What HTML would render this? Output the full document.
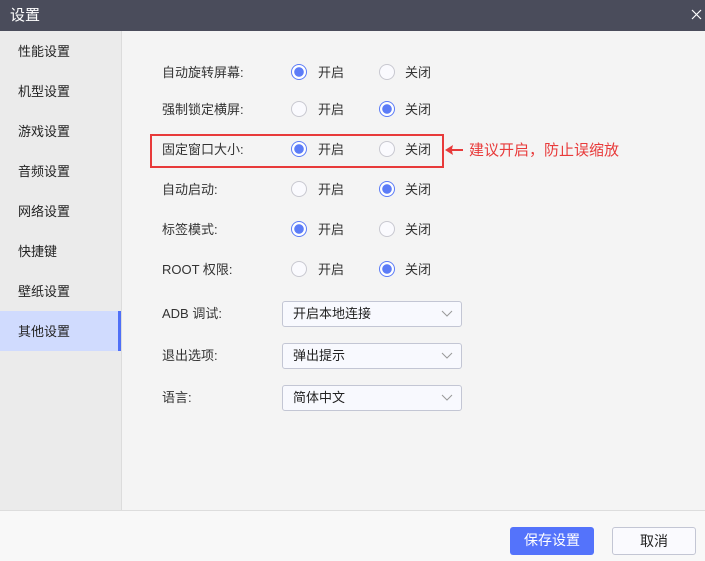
<!DOCTYPE html><html><head><meta charset="utf-8"><style>
*{margin:0;padding:0;box-sizing:border-box}
body{width:705px;height:561px;position:relative;background:#f4f4f4;font-family:"Liberation Sans","Noto Sans CJK SC",sans-serif;font-size:13px;color:#333;overflow:hidden}
.a{position:absolute}
.title{left:0;top:0;width:705px;height:31px;background:#4a4c5b;color:#fff;font-size:15px;line-height:31px;padding-left:10px}
.side{left:0;top:31px;width:122px;height:479px;background:#ebebeb;border-right:1px solid #dcdcdc}
.si{position:absolute;left:18px;font-size:13px;color:#222;line-height:20px}
.act{left:0;top:311px;width:121px;height:40px;background:#d0dbfe;border-right:3px solid #4f6ff7}
.lbl{left:162px;line-height:20px;color:#333}
.r{width:16px;height:16px;border-radius:50%;border:1px solid #c8c8d0;background:#fafafe}
.r.on{border:1px solid #5c7cf7;background:radial-gradient(circle,#5c7cf7 0 4.5px,#fff 5px)}
.t{line-height:20px}
.dd{left:282px;width:180px;height:26px;border:1px solid #c3c6d4;border-radius:3px;background:#f8f9fe;padding-left:10px;line-height:24px;color:#222}
.dd svg{position:absolute;right:8px;top:8px}
.foot{left:0;top:510px;width:705px;height:51px;background:#f8f8f8;border-top:1px solid #ddd}
.btn{top:527px;height:28px;border-radius:3px;text-align:center;line-height:27px;font-size:14px}
</style></head><body>
<div class="a title">设置</div>
<svg class="a" style="left:691px;top:9px" width="11" height="11"><path d="M1 1L10 10M10 1L1 10" stroke="#fff" stroke-width="1.2"/></svg>
<div class="a side"></div>
<div class="a act"></div>
<div class="si" style="top:42px">性能设置</div>
<div class="si" style="top:82px">机型设置</div>
<div class="si" style="top:122px">游戏设置</div>
<div class="si" style="top:162px">音频设置</div>
<div class="si" style="top:202px">网络设置</div>
<div class="si" style="top:242px">快捷键</div>
<div class="si" style="top:282px">壁纸设置</div>
<div class="si" style="top:322px">其他设置</div>

<div class="a lbl" style="top:63px">自动旋转屏幕:</div>
<div class="a r on" style="left:291px;top:64px"></div><div class="a t" style="left:318px;top:63px">开启</div>
<div class="a r" style="left:379px;top:64px"></div><div class="a t" style="left:405px;top:63px">关闭</div>

<div class="a lbl" style="top:100px">强制锁定横屏:</div>
<div class="a r" style="left:291px;top:101px"></div><div class="a t" style="left:318px;top:100px">开启</div>
<div class="a r on" style="left:379px;top:101px"></div><div class="a t" style="left:405px;top:100px">关闭</div>

<div class="a" style="left:150px;top:134px;width:294px;height:34px;border:2px solid #e83a3a"></div>
<div class="a lbl" style="top:140px">固定窗口大小:</div>
<div class="a r on" style="left:291px;top:141px"></div><div class="a t" style="left:318px;top:140px">开启</div>
<div class="a r" style="left:379px;top:141px"></div><div class="a t" style="left:405px;top:140px">关闭</div>
<svg class="a" style="left:444px;top:144px" width="20" height="12"><path d="M1 6L9 1L8 5H19V7H8L9 11Z" fill="#e83a3a"/></svg>
<div class="a" style="left:469px;top:141px;color:#e83a3a;font-size:15px;line-height:20px">建议开启，防止误缩放</div>

<div class="a lbl" style="top:180px">自动启动:</div>
<div class="a r" style="left:291px;top:181px"></div><div class="a t" style="left:318px;top:180px">开启</div>
<div class="a r on" style="left:379px;top:181px"></div><div class="a t" style="left:405px;top:180px">关闭</div>

<div class="a lbl" style="top:220px">标签模式:</div>
<div class="a r on" style="left:291px;top:221px"></div><div class="a t" style="left:318px;top:220px">开启</div>
<div class="a r" style="left:379px;top:221px"></div><div class="a t" style="left:405px;top:220px">关闭</div>

<div class="a lbl" style="top:260px">ROOT 权限:</div>
<div class="a r" style="left:291px;top:261px"></div><div class="a t" style="left:318px;top:260px">开启</div>
<div class="a r on" style="left:379px;top:261px"></div><div class="a t" style="left:405px;top:260px">关闭</div>

<div class="a lbl" style="top:304px">ADB 调试:</div>
<div class="a dd" style="top:301px">开启本地连接<svg width="12" height="8"><path d="M1 1L6 6L11 1" stroke="#999" fill="none"/></svg></div>
<div class="a lbl" style="top:346px">退出选项:</div>
<div class="a dd" style="top:343px">弹出提示<svg width="12" height="8"><path d="M1 1L6 6L11 1" stroke="#999" fill="none"/></svg></div>
<div class="a lbl" style="top:388px">语言:</div>
<div class="a dd" style="top:385px">简体中文<svg width="12" height="8"><path d="M1 1L6 6L11 1" stroke="#999" fill="none"/></svg></div>

<div class="a foot"></div>
<div class="a btn" style="left:510px;width:84px;background:#5473fb;color:#fff">保存设置</div>
<div class="a btn" style="left:612px;width:84px;background:#fafafe;border:1px solid #c3c6d4;color:#222">取消</div>
</body></html>
